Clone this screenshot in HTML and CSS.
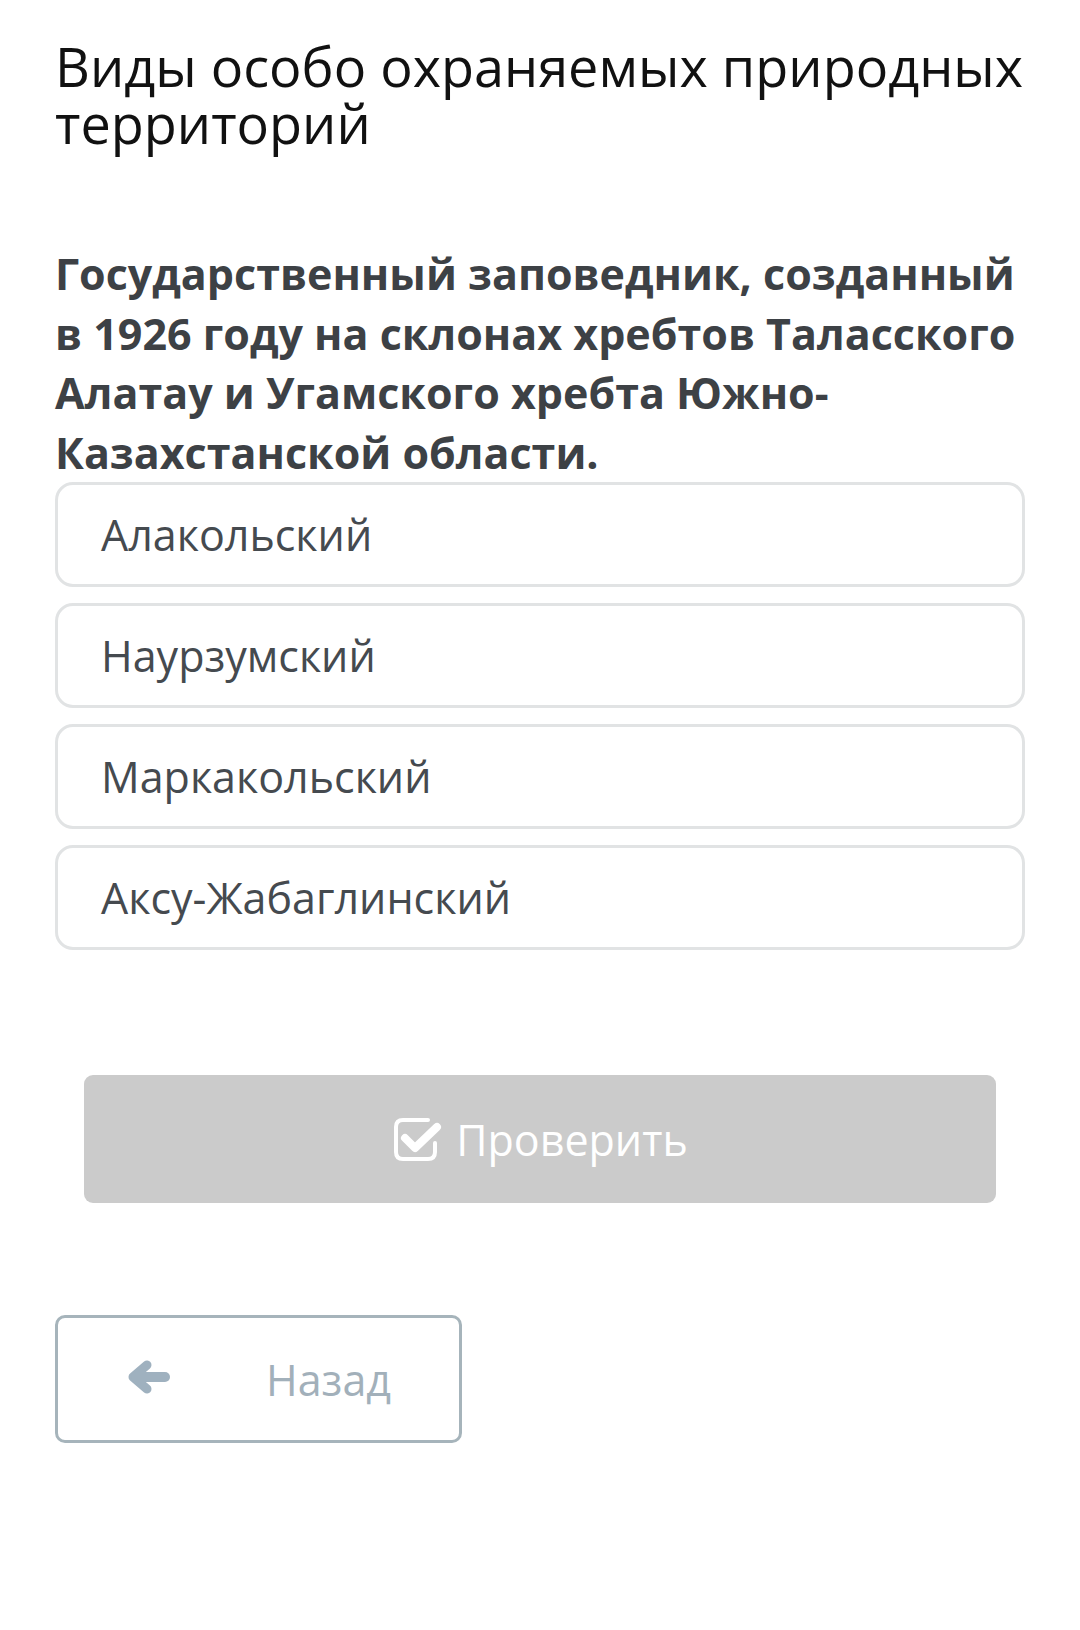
FILE: index.html
```html
<!DOCTYPE html>
<html lang="ru">
<head>
<meta charset="utf-8">
<link rel="stylesheet" href="styles.css">
</head>
<body>
<main class="page">
  <h1 class="title">Виды особо охраняемых природных территорий</h1>
  <p class="question">Государственный заповедник, созданный в 1926 году на склонах хребтов Таласского Алатау и Угамского хребта Южно-Казахстанской области.</p>
  <div class="options">
    <div class="option">Алакольский</div>
    <div class="option">Наурзумский</div>
    <div class="option">Маркакольский</div>
    <div class="option">Аксу-Жабаглинский</div>
  </div>
  <div class="check-wrap">
    <button class="check">
      <svg class="check-icon" viewBox="0 0 52 48" width="52" height="48">
        <path d="M36 5 H11 Q4 5 4 12 V37 Q4 44 11 44 H36 Q43 44 43 37 V28" fill="none" stroke="#fff" stroke-width="4" stroke-linecap="round"/>
        <path d="M13 23 L23 33 L45 12" fill="none" stroke="#fff" stroke-width="8" stroke-linecap="round" stroke-linejoin="round"/>
      </svg>
      <span>Проверить</span>
    </button>
  </div>
  <button class="back">
    <svg class="back-icon" viewBox="0 0 50 44" width="50" height="44">
      <path d="M23 8 L9 20 L23 32" fill="none" stroke="#9fb1bf" stroke-width="9" stroke-linecap="round" stroke-linejoin="round"/>
      <path d="M12 20 H41" fill="none" stroke="#9fb1bf" stroke-width="10" stroke-linecap="round"/>
    </svg>
    <span>Назад</span>
  </button>
</main>
</body>
</html>
```
FILE: styles.css
```css
html, body {
  margin: 0;
  padding: 0;
  background: #ffffff;
}
body {
  font-family: "Open Sans", "Noto Sans", sans-serif;
  width: 1080px;
  height: 1630px;
  overflow: hidden;
}
.page {
  padding: 38px 55px 0 55px;
  width: 970px;
}
.title {
  margin: 0;
  font-weight: 400;
  font-size: 54px;
  line-height: 57px;
  color: #111111;
}
.question {
  margin: 92px 0 0 0;
  font-weight: 700;
  font-size: 43px;
  line-height: 59.5px;
  color: #3d4145;
}
.options {
  display: flex;
  flex-direction: column;
  gap: 16px;
  margin-top: 0;
}
.option {
  height: 99px;
  border: 3px solid #e1e3e4;
  border-radius: 18px;
  box-sizing: content-box;
  display: flex;
  align-items: center;
  padding-left: 43px;
  font-size: 43px;
  color: #454a4f;
}
.check-wrap {
  padding: 0 29px;
  margin-top: 125px;
}
.check {
  width: 100%;
  height: 128px;
  box-sizing: border-box;
  background: #cbcbcb;
  border: none;
  border-radius: 9px;
  display: flex;
  align-items: center;
  justify-content: center;
  gap: 12px;
  font-family: inherit;
  font-size: 43px;
  color: #ffffff;
  padding: 0;
}
.check-icon {
  display: block;
}
.back {
  margin-top: 112px;
  width: 407px;
  height: 128px;
  box-sizing: border-box;
  border: 3px solid #a6b4bb;
  border-radius: 10px;
  background: #ffffff;
  display: flex;
  align-items: center;
  padding: 0 0 0 66px;
  gap: 92px;
  font-family: inherit;
  font-size: 43px;
  color: #a2b0ba;
}
.back-icon {
  display: block;
}
```
